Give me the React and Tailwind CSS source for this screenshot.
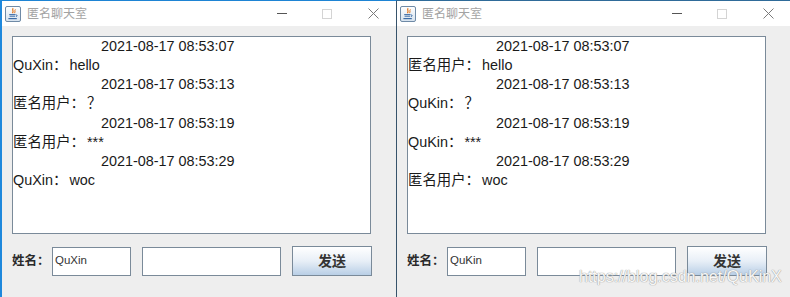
const leftLog = [
  { time: "2021-08-17 08:53:07", name: "QuXin", text: "hello" },
  { time: "2021-08-17 08:53:13", name: "匿名用户", text: "？" },
  { time: "2021-08-17 08:53:19", name: "匿名用户", text: "***" },
  { time: "2021-08-17 08:53:29", name: "QuXin", text: "woc" },
]

const rightLog = [
  { time: "2021-08-17 08:53:07", name: "匿名用户", text: "hello" },
  { time: "2021-08-17 08:53:13", name: "QuKin", text: "？" },
  { time: "2021-08-17 08:53:19", name: "QuKin", text: "***" },
  { time: "2021-08-17 08:53:29", name: "匿名用户", text: "woc" },
]

function JavaIcon() {
  return (
    <svg width="16" height="16" viewBox="0 0 16 16">
      <defs>
        <linearGradient id="jbg" x1="0" y1="0" x2="0" y2="1">
          <stop offset="0" stopColor="#ffffff" />
          <stop offset="1" stopColor="#d6e2ee" />
        </linearGradient>
      </defs>
      <rect x="0.5" y="0.5" width="15" height="15" rx="1.5" fill="url(#jbg)" stroke="#6f8aa6" />
      <path d="M8.2 2.2 C6.4 3.6 9.4 4.8 7.4 7.2" stroke="#e2761d" strokeWidth="1.2" fill="none" />
      <path d="M10.4 3.4 C9.2 4.6 10.8 5.6 9.4 7.2" stroke="#e2761d" strokeWidth="1" fill="none" />
      <path d="M4.2 8.6 h6.4" stroke="#3c6ca6" strokeWidth="1" />
      <path d="M4.6 10.2 h5.6 M11 8.8 c1.4 0 1.4 1.6 0 1.8" stroke="#3c6ca6" strokeWidth="1" fill="none" />
      <path d="M3.4 12.6 h8.4" stroke="#3c6ca6" strokeWidth="1.2" />
    </svg>
  )
}

function TitleBar() {
  return (
    <div className="flex h-[25px] items-center bg-white">
      <div className="flex w-[275px] items-center">
        <div className="ml-[3px] flex">
          <JavaIcon />
        </div>
        <span className="ml-[6px] text-[12px] leading-none text-[#a3a3a3]">匿名聊天室</span>
      </div>
      <div className="h-px w-[10px] bg-[#555]" />
      <div className="ml-[35px] h-[10px] w-[10px] border border-[#d4d4d4]" />
      <svg className="ml-[36px]" width="11" height="11" viewBox="0 0 11 11">
        <path d="M0.5 0.5 L10.5 10.5 M10.5 0.5 L0.5 10.5" stroke="#7a7a7a" strokeWidth="1" />
      </svg>
    </div>
  )
}

function ChatWindow({ log, user, className }) {
  return (
    <div className={`flex shrink-0 flex-col bg-[#eeeeee] ${className}`}>
      <TitleBar />
      <div className="pl-[10px] pt-[10px]">
        <div className="h-[198px] w-[359px] border border-[#7a8a99] bg-white text-[14.4px] leading-[19.15px] text-[#1a1a1a]">
          {log.map((m) => (
            <div key={m.time}>
              <div className="pl-[88px]">{m.time}</div>
              <div className="flex whitespace-pre">
                <span>{m.name}：</span>
                <span className="ml-[2px]">{m.text}</span>
              </div>
            </div>
          ))}
        </div>

        <div className="mt-[12px] flex items-center">
          <span className="w-[40px] text-[12.5px] font-bold text-[#2a2a2a]">姓名：</span>
          <div className="flex h-[29px] w-[79px] items-center border border-[#7a8a99] bg-white pl-[2px] text-[11.5px] text-[#333]">
            {user}
          </div>
          <div className="ml-[11px] h-[29px] w-[139px] border border-[#7a8a99] bg-white" />
          <button className="ml-[11px] flex h-[30px] w-[80px] items-center justify-center border border-[#7a8a99] bg-linear-to-b from-white via-[#e8eff7] to-[#b9cfe6] text-[14px] font-bold text-[#333]">
            发送
          </button>
        </div>
      </div>
    </div>
  )
}

export default function App() {
  return (
    <div className="relative flex h-[297px] w-[790px] overflow-hidden bg-[#eeeeee] font-['Liberation_Sans','Noto_Sans_CJK_SC',sans-serif]">
      <ChatWindow
        log={leftLog}
        user="QuXin"
        className="w-[397px] border-t border-r border-l-2 border-t-[#1e84d4] border-l-[#1e88dc] border-r-[#37536b]"
      />
      <ChatWindow log={rightLog} user="QuKin" className="w-[393px] border-t border-[#2f6b99]" />
      <div className="absolute left-[579px] top-[268px] text-[16px] leading-[18px] text-[#f7f7f7] [text-shadow:0_0_1px_#9a9a9a,0_0_1px_#9a9a9a]">
        https://blog.csdn.net/QuKinX
      </div>
    </div>
  )
}
